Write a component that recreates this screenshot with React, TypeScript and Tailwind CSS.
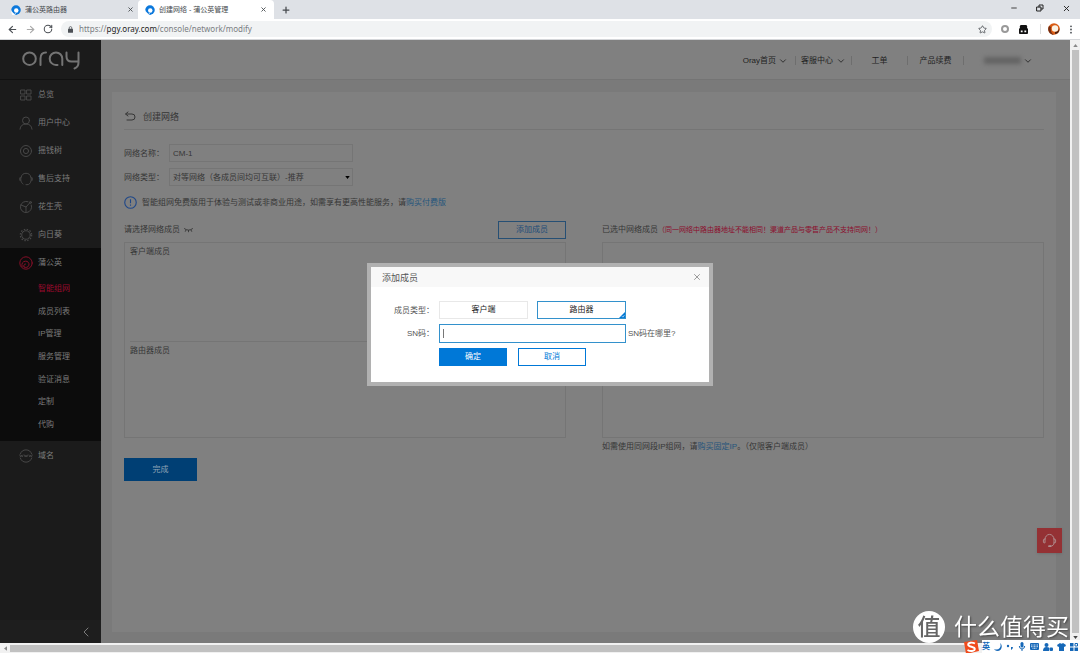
import React from "react";
import {
  ArrowLeft,
  ArrowRight,
  ChevronDown,
  ChevronLeft,
  Minus,
  Plus,
  RotateCw,
  Star,
  X,
} from "lucide-react";

type IconProps = { className?: string };

const stroke = {
  fill: "none",
  stroke: "currentColor",
  strokeWidth: 1,
  strokeLinecap: "round" as const,
  strokeLinejoin: "round" as const,
};

function Favicon() {
  return (
    <svg viewBox="0 0 20 20" className="size-[10px] shrink-0" aria-hidden="true">
      <circle cx="10" cy="10" r="9.500" fill="#0b78dc" />
      <circle cx="10.500" cy="11" r="4.500" fill="#fff" />
      <path d="M0 10c1 1 2 4 5 6l5 0-1 4H3Q0 16 0 10z" fill="#fff" />
      <path d="M5 12.500c.5 4 4 6 8 5.500l-3 1.500C6 19 4 16 5 12.500z" fill="#0b78dc" />
    </svg>
  );
}

function OrayLogo() {
  return (
    <svg viewBox="0 0 58 20" className="h-5 w-[58px]" role="img" aria-label="oray" fill="none" stroke="#747474" strokeWidth="2" strokeLinecap="round">
      <circle cx="7.500" cy="8.700" r="6.300" />
      <path d="M18.500 15V8.500Q18.500 2.400 24 2.400" />
      <path d="M40.300 15V8.700A6.300 6.300 0 1 0 34 15H35.500" />
      <path d="M44.500 2.400V6.500Q44.500 11.500 49.500 11.500H56.500M56.500 2.400V12.500Q56.500 17 52.500 18.500" />
    </svg>
  );
}

function OverviewIcon({ className }: IconProps) {
  return (
    <svg viewBox="0 0 14 14" className={className} {...stroke}>
      <rect x="2" y="2" width="4" height="4" />
      <rect x="8" y="2" width="4" height="4" />
      <rect x="2" y="8" width="4" height="4" />
      <rect x="8" y="8" width="4" height="4" />
    </svg>
  );
}

function UserIcon({ className }: IconProps) {
  return (
    <svg viewBox="0 0 14 14" className={className} {...stroke}>
      <circle cx="7" cy="4.500" r="3.500" />
      <path d="M1 13.200C1.300 9.800 3.500 8 7 8s5.700 1.800 6 5.200" />
    </svg>
  );
}

function TreeIcon({ className }: IconProps) {
  return (
    <svg viewBox="0 0 14 14" className={className} {...stroke}>
      <circle cx="7" cy="7" r="5.500" />
      <circle cx="7" cy="7" r="2.600" />
    </svg>
  );
}

function SupportIcon({ className }: IconProps) {
  return (
    <svg viewBox="0 0 14 14" className={className} {...stroke}>
      <path d="M2 5.500C2.500 2.500 4.500 1.300 7 1.300s4.500 1.200 5 4.200M1.800 5.500v3.200M.8 6v2.200M12.200 5.500v3.200M13.200 6v2.200M12 9c-.5 2.500-2 3.700-4 3.700H7M2 9c.3 1.300 1 2.300 2 3" />
    </svg>
  );
}

function ShellIcon({ className }: IconProps) {
  return (
    <svg viewBox="0 0 14 14" className={className} {...stroke}>
      <path d="M12.300 5A5.600 5.600 0 1 1 9 1.700M2 5l5 2 4.500-5M7 7v5.500" />
      <circle cx="11.500" cy="2.500" r="1" />
    </svg>
  );
}

function SunIcon({ className }: IconProps) {
  return (
    <svg viewBox="0 0 14 14" className={className} {...stroke}>
      <circle cx="7" cy="7" r="4.300" />
      <circle cx="7" cy="7" r="5.700" strokeWidth="1.200" strokeDasharray="1.500 1.484" strokeLinecap="butt" />
    </svg>
  );
}

function DandelionIcon({ className }: IconProps) {
  return (
    <svg viewBox="0 0 14 14" className={className} {...stroke}>
      <circle cx="7" cy="7" r="6.200" />
      <path d="M3 10.500C2.300 7.500 3.800 5.200 6.500 5.200A3.200 3.200 0 1 1 5 11" />
      <path d="M5 11C4.300 9.300 5 8 6.500 8" />
    </svg>
  );
}

function DomainIcon({ className }: IconProps) {
  return (
    <svg viewBox="0 0 14 14" className={className} {...stroke}>
      <path d="M1.300 5a6 6 0 0 1 11.400 0M1.300 9a6 6 0 0 0 11.400 0" />
      <path d="M.8 6l.8 2 .8-2 .8 2 .8-2M5.400 6l.8 2 .8-2 .8 2 .8-2M10 6l.8 2 .8-2 .8 2 .8-2" strokeWidth=".8" />
    </svg>
  );
}

function HeadsetIcon({ className }: IconProps) {
  return (
    <svg viewBox="0 0 16 16" className={className} {...stroke}>
      <path d="M3.200 6.500a4.800 5 0 0 1 9.600 0M3.200 6.500v4H2.500a1 1 0 0 1-1-1v-2a1 1 0 0 1 1-1zM12.800 6.500v4h.7a1 1 0 0 0 1-1v-2a1 1 0 0 0-1-1zM12.800 10.500c0 2.500-1.500 3.500-3.800 3.500" />
      <path d="M7.500 14h1.500" strokeWidth="2" />
    </svg>
  );
}

const tabs = [
  { title: "蒲公英路由器", active: false },
  { title: "创建网络 - 蒲公英管理", active: true },
];

const menu = [
  { label: "总览", Icon: OverviewIcon },
  { label: "用户中心", Icon: UserIcon },
  { label: "摇钱树", Icon: TreeIcon },
  { label: "售后支持", Icon: SupportIcon },
  { label: "花生壳", Icon: ShellIcon },
  { label: "向日葵", Icon: SunIcon },
];

const subMenu = ["智能组网", "成员列表", "IP管理", "服务管理", "验证消息", "定制", "代购"];

function BrowserChrome() {
  return (
    <header>
      <div className="flex h-[19px] bg-[#dee1e6] text-[7px] text-[#45494d]">
        {tabs.map((tab) => (
          <div
            key={tab.title}
            className={
              tab.active
                ? "flex w-[136px] items-center gap-1 rounded-t-[4px] bg-white px-[7px]"
                : "flex w-[138px] items-center gap-1 pl-[11px] pr-1"
            }
          >
            <Favicon />
            <span className="grow truncate">{tab.title}</span>
            <button aria-label="关闭标签页">
              <X className="size-[7px]" strokeWidth={3} />
            </button>
          </div>
        ))}
        <button aria-label="新标签页" className="ml-[7px]">
          <Plus className="size-[10px]" strokeWidth={3} />
        </button>
        <div className="ml-auto flex items-center gap-[18px] pr-[9px] pb-[3px] text-[#222]">
          <button aria-label="最小化"><Minus className="size-2" strokeWidth={2.5} /></button>
          <button aria-label="还原">
            <svg viewBox="0 0 8 8" className="size-2" {...stroke}>
              <path d="M1 3h4v4H1zM3 3V1h4v4H5" />
            </svg>
          </button>
          <button aria-label="关闭"><X className="size-[9px]" strokeWidth={2.5} /></button>
        </div>
      </div>
      <div className="flex h-[21px] items-center border-b border-[#d4d6d9] bg-white px-[7px] text-[#4c5055]">
        <button aria-label="后退"><ArrowLeft className="size-[11px]" strokeWidth={2.5} /></button>
        <button aria-label="前进" className="ml-[7px] text-[#aaa]"><ArrowRight className="size-[11px]" strokeWidth={2.5} /></button>
        <button aria-label="重新加载" className="ml-[7px]"><RotateCw className="size-[10px]" strokeWidth={2.5} /></button>
        <div className="ml-2 flex h-4 grow items-center rounded-full bg-[#f1f3f4] pr-[5px] pl-[7px]">
          <svg viewBox="0 0 6 8" className="h-[7px] w-[5px]" fill="currentColor">
            <rect y="3" width="6" height="5" rx=".6" />
            <path d="M1.500 3.500V2a1.500 1.500 0 0 1 3 0v1.500" fill="none" stroke="currentColor" strokeWidth=".9" />
          </svg>
          <p className="ml-[6px] grow font-['Noto_Sans','Open_Sans',sans-serif] text-[8px] text-[#7a7e82]">
            https://<span className="text-[#222]">pgy.oray.com</span>/console/network/modify
          </p>
          <button aria-label="收藏"><Star className="size-[9px]" strokeWidth={2.2} /></button>
        </div>
        <div className="ml-[9px] flex items-center">
          <span className="size-2 rounded-full border-2 border-[#999]" />
          <svg viewBox="0 0 10 10" className="ml-[10px] size-[9px]">
            <rect x="1" y="0" width="8" height="5" rx="1.500" fill="#111" />
            <rect x="0" y="3.500" width="10" height="6.500" rx="1" fill="#111" />
            <path d="M2 6h2v2H2zM6 6h2v2H6z" fill="#fff" />
          </svg>
          <span className="ml-3 h-[10px] w-px bg-[#ddd]" />
          <svg viewBox="0 0 12 12" className="ml-[7px] size-[12px]">
            <circle cx="6" cy="6" r="5.800" fill="#d95b13" />
            <path d="M1 3a6 6 0 0 0 5 9c-2-1-4-4-3-8z" fill="#732c10" />
            <circle cx="7" cy="5.500" r="3.200" fill="#fbf3e4" />
            <path d="M7 9c3 0 4-2 4-4 1 3-1 6-4 6z" fill="#492010" />
          </svg>
          <svg viewBox="0 0 4 10" className="ml-[9px] h-[9px] w-1" fill="currentColor">
            <circle cx="2" cy="1.500" r="1" />
            <circle cx="2" cy="5" r="1" />
            <circle cx="2" cy="8.500" r="1" />
          </svg>
        </div>
      </div>
    </header>
  );
}

function Sidebar() {
  const row = "flex h-7 items-center gap-[5px] pt-[2px] pl-[19px]";
  const icon = "size-[14px] text-[#474747]";
  return (
    <aside className="flex w-[101px] shrink-0 flex-col bg-[#1b1b1b] text-[#7b7b7b]">
      <div className="flex h-10 items-center justify-center border-b border-[#111]">
        <OrayLogo />
      </div>
      <nav>
        {menu.map(({ label, Icon }) => (
          <a key={label} href="#" className={row}>
            <Icon className={icon} />
            {label}
          </a>
        ))}
        <div className="bg-[#0c0c0c] pb-[6px]">
          <a href="#" className={row}>
            <DandelionIcon className="size-[14px] text-[#850f28]" />
            蒲公英
          </a>
          <ul className="grid h-[159px] auto-rows-fr pt-px">
            {subMenu.map((label, i) => (
              <li key={label} className="flex items-center pt-[2px] pl-[38px]">
                <a href="#" className={i === 0 ? "text-[#9c0a2c]" : undefined}>{label}</a>
              </li>
            ))}
          </ul>
        </div>
        <a href="#" className={row}>
          <DomainIcon className={icon} />
          域名
        </a>
      </nav>
      <button aria-label="收起菜单" className="mt-auto flex h-[23px] items-center justify-end bg-[#1e1e1e] pr-[7px]">
        <ChevronLeft className="size-4" strokeWidth={1.5} />
      </button>
    </aside>
  );
}

function TopNav() {
  const item = "flex h-[9px] w-14 items-center justify-center gap-[3px] border-l border-[#6e6e6e]";
  const chevron = "size-[10px]";
  return (
    <div className="flex h-10 items-center justify-end border-b border-[#747474] pt-[2px] text-[#222]">
      <a href="#" className="flex items-center gap-[2px] pr-[7px]">
        Oray首页 <ChevronDown className={chevron} strokeWidth={2} />
      </a>
      <a href="#" className={item}>
        客服中心 <ChevronDown className={chevron} strokeWidth={2} />
      </a>
      <a href="#" className={item}>工单</a>
      <a href="#" className={item}>产品续费</a>
      <button aria-label="账户" className="flex h-[9px] w-[107px] items-center gap-[2px] border-l border-[#6e6e6e] pl-5">
        <span className="h-[7px] w-[37px] bg-[#636363] blur-[2px]" />
        <ChevronDown className={chevron} strokeWidth={2} />
      </button>
    </div>
  );
}

function NetworkForm() {
  const field = "h-[18px] w-[184px] appearance-none border border-[#757575] bg-transparent px-[3px] text-[8px] outline-none";
  const primaryLink = "text-[#25557c]";
  return (
    <main className="mx-[11px] mt-3 mr-[14px] mb-[11px] grow bg-[#808080] px-3 pt-3">
      <div className="flex h-[26px] items-center gap-[7px] border-b border-[#757575] text-[9px]">
        <button aria-label="返回">
          <svg viewBox="0 0 12 12" className="size-3" {...stroke}>
            <path d="M2 3H8a3 3 0 0 1 0 6H3M4 1L1.500 3 4 5" />
          </svg>
        </button>
        <h1>创建网络</h1>
      </div>
      <div className="mt-[14px] flex items-center">
        <label htmlFor="network-name" className="w-[45px] pt-[2px]">网络名称：</label>
        <input id="network-name" className={field} defaultValue="CM-1" />
      </div>
      <div className="mt-[6px] flex items-center">
        <label htmlFor="network-type" className="w-[45px] pt-[2px]">网络类型：</label>
        <div className="relative flex">
          <select id="network-type" className={`${field} pt-px`}>
            <option>对等网络（各成员间均可互联）-推荐</option>
          </select>
          <svg viewBox="0 0 6 4" className="pointer-events-none absolute top-[8px] right-[3px] h-[3px] w-[5px]" fill="#000">
            <path d="M0 0h6L3 4z" />
          </svg>
        </div>
      </div>
      <div className="mt-[10px] flex items-center gap-[5px]">
        <svg viewBox="0 0 14 14" className="size-[13px]" fill="none" stroke="#1f4788" strokeWidth="1.200">
          <circle cx="7" cy="7" r="6.200" />
          <path d="M7 3.500v4.300M7 9.200v1.300" />
        </svg>
        <p className="pt-px">
          智能组网免费版用于体验与测试或非商业用途，如需享有更高性能服务，请<a href="#" className={primaryLink}>购买付费版</a>
        </p>
      </div>
      <div className="mt-3 grid grid-cols-2 gap-x-9">
        <section>
          <div className="mb-[3px] flex h-[18px] items-center gap-1">
            <h2>请选择网络成员</h2>
            <svg viewBox="0 0 10 6" className="h-[6px] w-[9px]" {...stroke}>
              <path d="M.5 1.500Q5 5 9.500 1.500M2.200 3L1.500 4.500M5 3.500V5M7.800 3l.7 1.500" />
            </svg>
            <button className="ml-auto h-[18px] w-[68px] border border-[#264f74] text-[#1d4c78]">添加成员</button>
          </div>
          <div className="h-[196px] border border-[#757575] pl-[5px]">
            <h3 className="flex h-[99px] items-start border-b border-[#757575] pt-[3px]">客户端成员</h3>
            <h3 className="pt-[3px]">路由器成员</h3>
          </div>
        </section>
        <section>
          <h2 className="mb-[3px] flex h-[18px] items-center">
            已选中网络成员
            <span className="text-[7px] text-[#8c0c2c]">（同一网络中路由器地址不能相同！渠道产品与零售产品不支持同网！）</span>
          </h2>
          <div className="h-[196px] border border-[#757575]" />
          <p className="mt-[3px]">
            如需使用同网段IP组网，请<a href="#" className={primaryLink}>购买固定IP</a>。（仅限客户端成员）
          </p>
        </section>
      </div>
      <button className="mt-[5px] h-[23px] w-[73px] bg-[#003f74] text-[#8fa3b5]">完成</button>
    </main>
  );
}

function AddMemberDialog() {
  const label = "w-[68px] shrink-0";
  const action = "h-[18px] w-[68px] border border-[#0078d7]";
  return (
    <div className="pointer-events-none fixed inset-0 flex items-center justify-center pb-1">
      <div
        role="dialog"
        aria-labelledby="dialog-title"
        className="pointer-events-auto w-[346px] border-4 border-[#b1b1b1] bg-white text-[#555]"
      >
        <div className="flex h-5 items-center justify-between bg-[#f8f8f8] pr-[7px] pl-[11px]">
          <h2 id="dialog-title" className="pt-px text-[9px]">添加成员</h2>
          <button aria-label="关闭"><X className="size-[10px] text-[#888]" strokeWidth={2} /></button>
        </div>
        <div className="flex flex-col gap-[5px] pt-[14px] pb-4">
          <div className="flex items-center">
            <span id="member-type" className={label}><span className="block pt-px pr-[5px] text-right">成员类型：</span></span>
            <div role="group" aria-labelledby="member-type" className="flex gap-[9px] text-[#222]">
              <button className="h-[18px] w-[89px] border border-[#e8e8e8]">客户端</button>
              <button className="relative h-[18px] w-[89px] border border-[#3391cc]">
                路由器
                <svg viewBox="0 0 7 7" className="absolute right-0 bottom-0 size-[6px]">
                  <path d="M7 0v7H0z" fill="#0078d7" />
                  <path d="M3.500 5l1 1 1.700-2.200" fill="none" stroke="#fff" strokeWidth=".8" />
                </svg>
              </button>
            </div>
          </div>
          <div className="flex items-center">
            <label htmlFor="sn" className={label}><span className="block pr-[5px] text-right">SN码：</span></label>
            <div className="flex h-[19px] w-[187px] items-center border border-[#3391cc] pl-[3px]">
              <span className="h-[9px] w-px bg-[#777]" />
              <input id="sn" className="w-full bg-transparent text-[8px] outline-none" />
            </div>
            <a href="#" className="ml-[2px]">SN码在哪里?</a>
          </div>
          <div className="flex gap-[11px] pl-[68px]">
            <button className={`${action} bg-[#0078d7] text-white`}>确定</button>
            <button className={`${action} text-[#0078d7]`}>取消</button>
          </div>
        </div>
      </div>
    </div>
  );
}

function Watermark() {
  return (
    <div className="fixed right-[11px] bottom-[10px] flex items-center gap-[9px] text-white">
      <span className="flex size-8 items-center justify-center rounded-full bg-white text-[23px] leading-none font-medium text-[#666]">值</span>
      <span className="text-[23px] leading-none [text-shadow:1px_1px_2px_#444]">什么值得买</span>
    </div>
  );
}

function InputMethodBar() {
  return (
    <div className="fixed right-0 bottom-0 flex h-[13px] items-center gap-[3px] text-[#1668b8]">
      <svg viewBox="0 0 16 14" className="h-[14px] w-4">
        <path d="M1 2l13-2 2 11-13 3z" fill="#f04b1c" />
        <path d="M12 3.500C9 2 5 2.500 5.200 4.800S12 6.500 11.800 9 7 11.500 4.500 10" fill="none" stroke="#fff" strokeWidth="1.900" />
      </svg>
      <div className="flex h-[13px] items-center gap-1 bg-white pr-[2px] text-[8px] font-bold">
        <span>英</span>
        <svg viewBox="0 0 8 8" className="size-2" fill="currentColor"><path d="M6 0c2 4-1 8-6 6 0 0 1 2 4 2 4 0 5-6 2-8z" /></svg>
        <svg viewBox="0 0 8 8" className="size-2" fill="currentColor"><circle cx="2" cy="3" r="1.200" /><path d="M5 4h2q0 2-2 3z" /></svg>
        <svg viewBox="0 0 8 9" className="h-[9px] w-2" fill="currentColor"><rect x="2.500" width="3" height="5.500" rx="1.500" /><path d="M.8 4h1q.4 2.500 2.200 2.500T6.200 4h1Q7 7 4.500 7.400V9h-1V7.400Q1 7 .8 4z" /></svg>
        <svg viewBox="0 0 9 7" className="h-[7px] w-[9px]"><rect width="9" height="7" rx="1" fill="currentColor" /><path d="M1 2h7M1 3.700h7M2.500 5.300h4" stroke="#fff" strokeWidth=".8" strokeDasharray="1 .5" /></svg>
        <svg viewBox="0 0 10 8" className="h-2 w-[10px]" fill="currentColor"><circle cx="3.500" cy="2" r="2" /><path d="M0 8q0-4 3.500-4T6 6v2z" /><rect x="6.500" y="4.500" width="3.500" height="3.500" rx="1" /></svg>
        <svg viewBox="0 0 9 8" className="h-2 w-[9px]" fill="currentColor"><path d="M3 0q1.500 1.500 3 0l3 2-1 2-1-.5V8H2V3.500L1 4 0 2z" /></svg>
        <svg viewBox="0 0 8 8" className="size-2" fill="currentColor"><path d="M0 0h3.500v3.500H0zM0 4.500h3.500V8H0zM4.500 4.500H8V8H4.500z" /><path d="M5 .5h2.500V3H5z" fill="none" stroke="currentColor" /></svg>
      </div>
    </div>
  );
}

export default function App() {
  return (
    <div className="flex min-h-screen flex-col bg-[#f1f1f1] font-['Liberation_Sans','Noto_Sans_CJK_SC',sans-serif] text-[8px] leading-[12px]">
      <BrowserChrome />
      <div className="flex grow">
        <Sidebar />
        <div className="flex grow flex-col bg-[#808080] text-[#363636]">
          <TopNav />
          <div className="flex grow flex-col bg-[#7a7a7a]">
            <NetworkForm />
          </div>
        </div>
        <div className="flex w-[10px] shrink-0 flex-col items-center justify-between py-1">
          <svg viewBox="0 0 6 4" className="h-[3px] w-[5px]" fill="#888"><path d="M0 4h6L3 0z" /></svg>
          <div className="my-[3px] w-[7px] grow bg-[#c1c1c1]" />
          <svg viewBox="0 0 6 4" className="h-[3px] w-[5px]" fill="#444"><path d="M0 0h6L3 4z" /></svg>
        </div>
      </div>
      <div className="flex h-[10px] shrink-0 items-center pl-1">
        <svg viewBox="0 0 4 6" className="h-[5px] w-[3px]" fill="#888"><path d="M4 0v6L0 3z" /></svg>
        <div className="mr-[110px] ml-[3px] h-[7px] grow bg-[#c1c1c1]" />
      </div>
      <button aria-label="在线客服" className="fixed right-[18px] bottom-[100px] flex size-[25px] items-center justify-center bg-[#943134] text-[#b08f90] shadow">
        <HeadsetIcon className="size-[15px]" />
      </button>
      <AddMemberDialog />
      <Watermark />
      <InputMethodBar />
    </div>
  );
}
